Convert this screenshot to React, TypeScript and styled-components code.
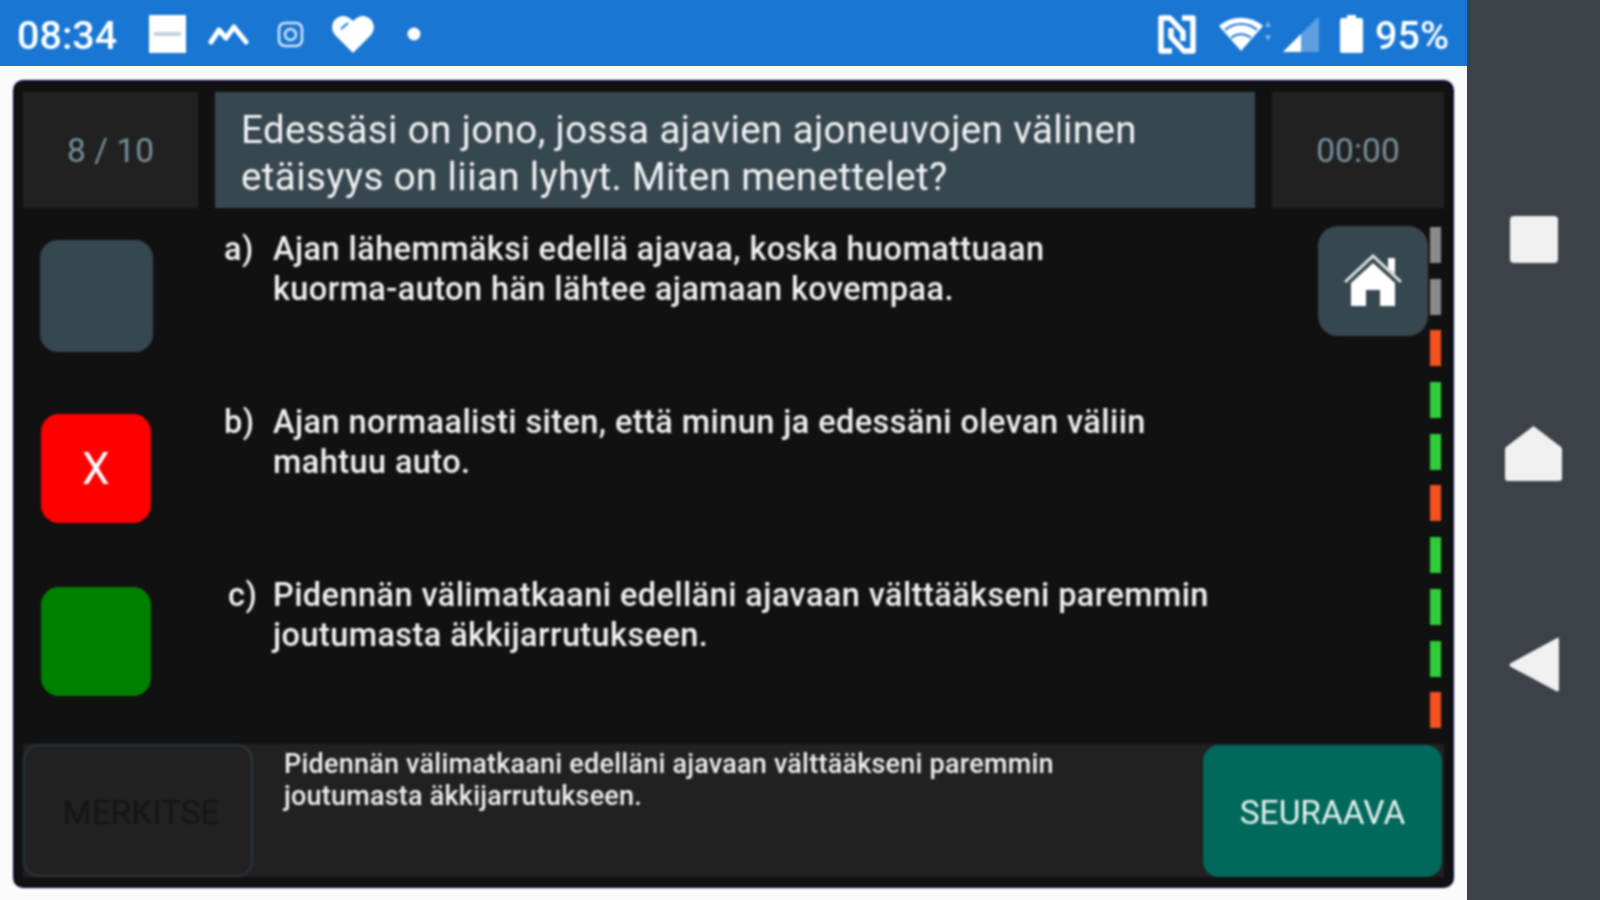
import React from 'react';
import styled, { createGlobalStyle } from 'styled-components';

const GlobalStyle = createGlobalStyle`
  html, body {
    margin: 0;
    padding: 0;
    width: 1600px;
    height: 900px;
    overflow: hidden;
    background: #fafafa;
    font-family: Roboto, "Liberation Sans", sans-serif;
  }
`;

const Screen = styled.div`
  display: flex;
  width: 1600px;
  height: 900px;
`;

const Device = styled.div`
  width: 1467px;
  display: flex;
  flex-direction: column;
  background: #fbfbfb;
`;

const StatusBar = styled.div`
  height: 66px;
  background: #1976d2;
  display: flex;
  align-items: center;
  justify-content: space-between;
  padding: 2px 18px 0 17px;
  box-sizing: border-box;
  color: #fff;
`;

const StatusGroup = styled.div`
  display: flex;
  align-items: center;
  filter: blur(0.8px);
`;

const StatusText = styled.span<{ $gap?: number }>`
  font-size: 39.5px;
  font-weight: 500;
  line-height: 1;
  margin: 3px 0 0 ${(p) => p.$gap ?? 0}px;
`;

const StatusIcon = styled.svg<{ $gap: number }>`
  display: block;
  margin-left: ${(p) => p.$gap}px;
`;

const Panel = styled.div`
  margin: 14px 13px 12px 13px;
  height: 808px;
  box-sizing: border-box;
  background: #111;
  border: 2px solid #08082e;
  border-radius: 10px;
  display: flex;
  flex-direction: column;
  padding-top: 10px;
  filter: blur(0.8px);
`;

const Header = styled.div`
  display: grid;
  grid-template-columns: 175px 1040px 172px;
  justify-content: space-between;
  padding: 0 8px;
  height: 116px;
`;

const SideCell = styled.div`
  background: #212121;
  color: #78909c;
  font-size: 33.5px;
  display: flex;
  align-items: center;
  justify-content: center;
`;

const Question = styled.div`
  background: #37474f;
  color: #f2f4f5;
  font-size: 38.5px;
  letter-spacing: 0.4px;
  line-height: 47px;
  padding: 14px 0 0 26px;
  box-sizing: border-box;
`;

const Body = styled.div`
  flex: 1;
  display: flex;
  min-height: 0;
`;

const Options = styled.div`
  flex: 1;
  padding-top: 21px;
`;

const OptionRow = styled.div`
  display: grid;
  grid-template-columns: 162px 49px 1fr;
  height: 173px;
  align-items: start;
  color: #f0f0f0;
  font-size: 32.5px;
  font-weight: 500;
  letter-spacing: 0.42px;
  line-height: 40px;
`;

const AnswerBox = styled.div<{ $color: string; $size: number; $top: number }>`
  width: ${(p) => p.$size}px;
  height: ${(p) => p.$size - 1}px;
  margin: ${(p) => p.$top}px auto 0;
  border-radius: 18px;
  background: ${(p) => p.$color};
  color: #fff;
  font-size: 44px;
  font-weight: 400;
  display: flex;
  align-items: center;
  justify-content: center;
`;

const OptionLabel = styled.div<{ $shift: number }>`
  margin-left: ${(p) => 47 + p.$shift}px;
  white-space: nowrap;
`;

const OptionText = styled.div`
  margin-left: 47px;
  white-space: nowrap;
`;

const HomeButton = styled.div`
  width: 110px;
  height: 110px;
  margin: 18px 1px 0 0;
  border-radius: 20px;
  background: #37474f;
  display: flex;
  align-items: center;
  justify-content: center;
`;

const Progress = styled.div`
  width: 11px;
  margin: 19px 11px 0 1px;
  display: flex;
  flex-direction: column;
  gap: 15.7px;
`;

const ProgressMark = styled.div<{ $color: string }>`
  height: 36px;
  background: ${(p) => p.$color};
`;

const Footer = styled.div`
  height: 133px;
  margin: 0 8px 9px;
  background: #212121;
  display: flex;
`;

const MarkButton = styled.div`
  width: 230px;
  box-sizing: border-box;
  border: 2px solid #2b373d;
  border-radius: 16px;
  color: #151515;
  font-size: 33.5px;
  padding: 4px 0 0 6px;
  display: flex;
  align-items: center;
  justify-content: center;
`;

const Explanation = styled.div`
  flex: 1;
  color: #eee;
  font-size: 27px;
  font-weight: 500;
  letter-spacing: 0.22px;
  line-height: 32px;
  padding: 4px 0 0 31px;
  white-space: nowrap;
`;

const NextButton = styled.div`
  width: 239px;
  margin: 1px 2px 0 0;
  padding-top: 3px;
  box-sizing: border-box;
  border-radius: 16px;
  background: #00695c;
  color: #e8f0ee;
  font-size: 33.5px;
  display: flex;
  align-items: center;
  justify-content: center;
`;

const NavBar = styled.div`
  flex: 1;
  background: #3d4249;
  display: flex;
  flex-direction: column;
  align-items: center;
  padding-top: 216px;
  gap: 162px;
`;

const NavIcon = styled.svg<{ $pull?: number }>`
  display: block;
  margin: ${(p) => -(p.$pull ?? 0)}px 0 0 0;
  filter: blur(0.8px);
`;

const marks = ['#8a8a8a', '#8a8a8a', '#f4511e', '#2ecc38', '#2ecc38', '#f4511e', '#2ecc38', '#2ecc38', '#2ecc38', '#f4511e'];

export default function App() {
  return (
    <Screen>
      <GlobalStyle />
      <Device>
        <StatusBar>
          <StatusGroup>
            <StatusText>08:34</StatusText>
            <StatusIcon $gap={32} width="37" height="38" viewBox="0 0 37 38">
              <rect width="37" height="38" fill="#fff" />
              <rect x="5" y="17" width="27" height="4" fill="#c3d0de" />
            </StatusIcon>
            <StatusIcon $gap={22} width="42" height="22" viewBox="0 0 42 22">
              <path d="M3 19 L11 7 L18 15 L26 4 L38 19" fill="none" stroke="#fff" strokeWidth="5" strokeLinejoin="round" strokeLinecap="round" />
            </StatusIcon>
            <StatusIcon $gap={27} width="27" height="27" viewBox="0 0 27 27">
              <rect x="2" y="2" width="23" height="23" rx="6" fill="none" stroke="#d5e5f6" strokeWidth="2.5" />
              <circle cx="13.5" cy="13.5" r="5.5" fill="none" stroke="#d5e5f6" strokeWidth="2.5" />
            </StatusIcon>
            <StatusIcon $gap={27} width="44" height="39" viewBox="0 0 44 39">
              <path d="M22 38 L4 20 C-3 11 4 1 12 1 C16 1 19 3 22 6 C25 3 28 1 32 1 C40 1 47 11 40 20 Z" fill="#fff" />
              <path d="M10 14 L17 8" stroke="#1976d2" strokeWidth="2" />
            </StatusIcon>
            <StatusIcon $gap={32} width="14" height="14" viewBox="0 0 14 14">
              <circle cx="7" cy="7" r="6.5" fill="#fff" />
            </StatusIcon>
          </StatusGroup>
          <StatusGroup>
            <StatusIcon $gap={0} width="40" height="39" viewBox="0 0 40 39">
              <path d="M15 36 H4 V3 H13 L26 17 V26" fill="none" stroke="#fff" strokeWidth="5.5" strokeLinejoin="round" />
              <path d="M25 3 H36 V36 H27 L14 22 V13" fill="none" stroke="#fff" strokeWidth="5.5" strokeLinejoin="round" />
            </StatusIcon>
            <StatusIcon $gap={22} width="54" height="36" viewBox="0 0 54 36">
              <path d="M22 35 L0 10 C12 -1 32 -1 44 10 Z" fill="#fff" />
              <path d="M6 14 C15 6 29 6 38 14 M12 22 C18 17 26 17 32 22" fill="none" stroke="#1976d2" strokeWidth="2" />
              <path d="M49 5 L46 11 H52 Z M49 25 L46 19 H52 Z" fill="#7fb2e5" />
            </StatusIcon>
            <StatusIcon $gap={10} width="36" height="36" viewBox="0 0 36 36">
              <path d="M36 0 V36 H0 Z" fill="#5e9fe0" />
              <path d="M18 18 V36 H0 Z" fill="#fff" />
            </StatusIcon>
            <StatusIcon $gap={21} width="23" height="38" viewBox="0 0 23 38">
              <path d="M7 0 H16 V3 H21 C22 3 23 4 23 5 V36 C23 37 22 38 21 38 H2 C1 38 0 37 0 36 V5 C0 4 1 3 2 3 H7 Z" fill="#fff" />
            </StatusIcon>
            <StatusText $gap={12}>95%</StatusText>
          </StatusGroup>
        </StatusBar>
        <Panel>
          <Header>
            <SideCell>8 / 10</SideCell>
            <Question>
              Edessäsi on jono, jossa ajavien ajoneuvojen välinen
              <br />
              etäisyys on liian lyhyt. Miten menettelet?
            </Question>
            <SideCell>00:00</SideCell>
          </Header>
          <Body>
            <Options>
              <OptionRow>
                <AnswerBox $color="#37474f" $size={113} $top={11} />
                <OptionLabel $shift={0}>a)</OptionLabel>
                <OptionText>
                  Ajan lähemmäksi edellä ajavaa, koska huomattuaan
                  <br />
                  kuorma-auton hän lähtee ajamaan kovempaa.
                </OptionText>
              </OptionRow>
              <OptionRow>
                <AnswerBox $color="#ff0000" $size={110} $top={12}>X</AnswerBox>
                <OptionLabel $shift={0}>b)</OptionLabel>
                <OptionText>
                  Ajan normaalisti siten, että minun ja edessäni olevan väliin
                  <br />
                  mahtuu auto.
                </OptionText>
              </OptionRow>
              <OptionRow>
                <AnswerBox $color="#008000" $size={110} $top={12} />
                <OptionLabel $shift={4}>c)</OptionLabel>
                <OptionText>
                  Pidennän välimatkaani edelläni ajavaan välttääkseni paremmin
                  <br />
                  joutumasta äkkijarrutukseen.
                </OptionText>
              </OptionRow>
            </Options>
            <HomeButton>
              <svg width="58" height="54" viewBox="0 0 58 54">
                <path d="M1 28 L29 2 L57 28" fill="none" stroke="#dfe5e8" strokeWidth="3" />
                <path d="M44 4 H51 V20 L44 14 Z" fill="#fff" />
                <path d="M29 9 L51 29 V52 H36 V36 H22 V52 H7 V29 Z" fill="#fff" />
              </svg>
            </HomeButton>
            <Progress>
              {marks.map((color, i) => (
                <ProgressMark key={i} $color={color} />
              ))}
            </Progress>
          </Body>
          <Footer>
            <MarkButton>MERKITSE</MarkButton>
            <Explanation>
              Pidennän välimatkaani edelläni ajavaan välttääkseni paremmin
              <br />
              joutumasta äkkijarrutukseen.
            </Explanation>
            <NextButton>SEURAAVA</NextButton>
          </Footer>
        </Panel>
      </Device>
      <NavBar>
        <NavIcon width="48" height="47" viewBox="0 0 48 47">
          <rect width="48" height="47" rx="4" fill="#f0f0f0" />
        </NavIcon>
        <NavIcon width="57" height="57" viewBox="0 0 57 57">
          <path d="M28.5 1 L56 22 C57 23 57 24 57 25 V53 C57 55 56 56 54 56 H3 C1 56 0 55 0 53 V25 C0 24 0 23 1 22 Z" fill="#f0f0f0" />
        </NavIcon>
        <NavIcon $pull={7} width="50" height="55" viewBox="0 0 50 55">
          <path d="M48 1 C49 0 50 1 50 3 V52 C50 54 49 55 47 54 L2 30 C0 29 0 27 2 26 Z" fill="#f0f0f0" />
        </NavIcon>
      </NavBar>
    </Screen>
  );
}
